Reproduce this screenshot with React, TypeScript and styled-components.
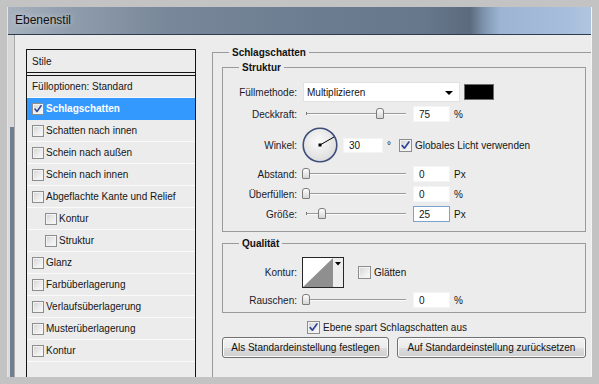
import React from 'react';
import styled, { createGlobalStyle } from 'styled-components';

const GlobalStyle = createGlobalStyle`
  body {
    margin: 0;
    background: #c3c3c3;
    font-family: "Liberation Sans", Arial, sans-serif;
    font-size: 10px;
    color: #151515;
  }
`;

interface StyleItem {
  label: string;
  checked?: boolean;
  selected?: boolean;
  indent?: boolean;
  noBox?: boolean;
}

const styleItems: StyleItem[] = [
  { label: 'Fülloptionen: Standard', noBox: true },
  { label: 'Schlagschatten', checked: true, selected: true },
  { label: 'Schatten nach innen' },
  { label: 'Schein nach außen' },
  { label: 'Schein nach innen' },
  { label: 'Abgeflachte Kante und Relief' },
  { label: 'Kontur', indent: true },
  { label: 'Struktur', indent: true },
  { label: 'Glanz' },
  { label: 'Farbüberlagerung' },
  { label: 'Verlaufsüberlagerung' },
  { label: 'Musterüberlagerung' },
  { label: 'Kontur' }
];

function CheckBox({ checked, size = 13 }: { checked?: boolean; size?: number }) {
  return (
    <Box $size={size}>
      {checked && (
        <svg width={size - 2} height={size - 2} viewBox="0 0 11 11">
          <path
            d="M2.2 5.6 L4.4 8.2 L8.9 1.9"
            fill="none"
            stroke="#2f4595"
            strokeWidth="1.7"
            strokeLinecap="round"
            strokeLinejoin="round"
          />
        </svg>
      )}
    </Box>
  );
}

function Slider({ pos }: { pos: number }) {
  return (
    <SliderWrap>
      <Track />
      {pos > 0 && <Tick />}
      <Thumb style={{ left: Math.round(pos * 98) }} />
    </SliderWrap>
  );
}

interface SliderRowProps {
  label: string;
  value: string;
  unit: string;
  pos: number;
  mt?: number;
  focused?: boolean;
}

function SliderRow({ label, value, unit, pos, mt = 0, focused }: SliderRowProps) {
  return (
    <Row $h={20} $mt={mt}>
      <Label>{label}</Label>
      <Slider pos={pos} />
      <NumberField $focused={focused}>{value}</NumberField>
      <Unit>{unit}</Unit>
    </Row>
  );
}

export default function App() {
  return (
    <>
      <GlobalStyle />
      <Frame>
        <Window>
          <TitleBar>Ebenenstil</TitleBar>
          <Body>
            <SideEdge />
            <Content>
              <ListBox>
                <ListHeader>Stile</ListHeader>
                <ListItems>
                  {styleItems.map((item, i) => (
                    <ListRow key={i} $selected={item.selected} $indent={item.indent}>
                      {!item.noBox && <CheckBox checked={item.checked} size={12} />}
                      <ListLabel $selected={item.selected}>{item.label}</ListLabel>
                    </ListRow>
                  ))}
                </ListItems>
              </ListBox>

              <Settings>
                <OuterGroup>
                  <OuterLegend>Schlagschatten</OuterLegend>

                  <Group $pad="8px 0 7px 0">
                    <GroupLegend>Struktur</GroupLegend>
                    <Row $h={20}>
                      <Label>Füllmethode:</Label>
                      <Select>
                        Multiplizieren
                        <SelectArrow />
                      </Select>
                      <Swatch />
                    </Row>
                    <SliderRow label="Deckkraft:" value="75" unit="%" pos={0.755} mt={2} />
                    <Row $h={36} $mt={3}>
                      <Label>Winkel:</Label>
                      <Dial>
                        <svg width="36" height="36" viewBox="0 0 36 36">
                          <defs>
                            <radialGradient id="dialFill" cx="45%" cy="40%" r="65%">
                              <stop offset="0" stopColor="#fbfbfb" />
                              <stop offset="1" stopColor="#dadada" />
                            </radialGradient>
                          </defs>
                          <circle
                            cx="18"
                            cy="18"
                            r="16.8"
                            fill="url(#dialFill)"
                            stroke="#3f4f7c"
                            strokeWidth="1.6"
                          />
                          <line x1="18" y1="18" x2="32" y2="10" stroke="#000" strokeWidth="1" />
                          <rect x="16.5" y="16.5" width="3" height="3" fill="#000" />
                        </svg>
                      </Dial>
                      <NumberField $w={40} $h={15}>30</NumberField>
                      <Unit>°</Unit>
                      <CheckLabel $ml={8}>
                        <CheckBox checked />
                        Globales Licht verwenden
                      </CheckLabel>
                    </Row>
                    <SliderRow label="Abstand:" value="0" unit="Px" pos={0} mt={1} />
                    <SliderRow label="Überfüllen:" value="0" unit="%" pos={0} />
                    <SliderRow label="Größe:" value="25" unit="Px" pos={0.163} focused />
                  </Group>

                  <Group $pad="6px 0 2px 0" $mt={5}>
                    <GroupLegend>Qualität</GroupLegend>
                    <Row $h={32}>
                      <Label>Kontur:</Label>
                      <ContourPicker>
                        <svg width="42" height="31" viewBox="0 0 42 31">
                          <rect x="0.5" y="0.5" width="41" height="30" fill="#fff" stroke="#262626" />
                          <polygon points="1,30 31,1 31,30" fill="#8f8f8f" />
                          <rect x="31" y="1" width="10" height="29" fill="#ededed" />
                          <polygon points="33,5 39,5 36,8.5" fill="#000" />
                        </svg>
                      </ContourPicker>
                      <CheckLabel $ml={14}>
                        <CheckBox />
                        Glätten
                      </CheckLabel>
                    </Row>
                    <SliderRow label="Rauschen:" value="0" unit="%" pos={0} mt={2} />
                  </Group>

                  <CheckLabel $ml={85} $mt={6}>
                    <CheckBox checked />
                    Ebene spart Schlagschatten aus
                  </CheckLabel>

                  <ButtonRow>
                    <Button $w={167}>Als Standardeinstellung festlegen</Button>
                    <Button $w={189}>Auf Standardeinstellung zurücksetzen</Button>
                  </ButtonRow>
                </OuterGroup>
              </Settings>
            </Content>
          </Body>
        </Window>
      </Frame>
    </>
  );
}

const Frame = styled.div`
  width: 599px;
  height: 384px;
  box-sizing: border-box;
  padding: 7px;
  background: #c3c3c3;
  overflow: hidden;
`;

const Window = styled.div`
  height: 100%;
  display: flex;
  flex-direction: column;
  border-left: 1px solid #e2e4e6;
  border-right: 1px solid #f4f4f4;
  overflow: hidden;
`;

const TitleBar = styled.div`
  height: 28px;
  box-sizing: border-box;
  flex-shrink: 0;
  display: flex;
  align-items: center;
  padding: 0 0 1px 7px;
  font-size: 12px;
  color: #101010;
  border-bottom: 1px solid #2f3d4f;
  text-shadow: 0 0 6px rgba(255, 255, 255, 0.7);
  background: linear-gradient(
    90deg,
    #a7b2be 0px,
    #909dad 60px,
    #788799 160px,
    #6d7d91 300px,
    #66768b 420px,
    #5c6a7c 462px,
    #7e94ae 476px,
    #9db5d3 492px,
    #a7bfdc 560px,
    #b0c6e0 584px
  );
`;

const Body = styled.div`
  flex: 1;
  min-height: 0;
  display: flex;
`;

const SideEdge = styled.div`
  width: 6px;
  flex-shrink: 0;
  border-right: 1px solid #a9a9a9;
  background: linear-gradient(to bottom, #d8d8d8 92px, transparent 92px),
    linear-gradient(to right, #dcdcdc 2px, #6e7f94 2px);
`;

const Content = styled.div`
  flex: 1;
  min-width: 0;
  display: flex;
  align-items: stretch;
  padding: 14px 0 0 11px;
  background: #ececec;
  overflow: hidden;
`;

const ListBox = styled.div`
  width: 170px;
  flex-shrink: 0;
  box-sizing: border-box;
  border: 1px solid #141414;
  border-bottom: none;
  background: #ececec;
`;

const ListHeader = styled.div`
  height: 23px;
  box-sizing: border-box;
  display: flex;
  align-items: center;
  padding-left: 5px;
  border-bottom: 1px solid #141414;
`;

const ListItems = styled.div`
  margin-top: 2px;
  border-top: 1px solid #141414;
`;

const ListRow = styled.div<{ $selected?: boolean; $indent?: boolean }>`
  height: 22px;
  box-sizing: border-box;
  display: flex;
  align-items: center;
  gap: 2px;
  padding-left: ${(p) => (p.$indent ? 18 : 5)}px;
  border-bottom: 1px solid ${(p) => (p.$selected ? '#3399ff' : '#fafafa')};
  background: ${(p) => (p.$selected ? '#3399ff' : 'transparent')};
`;

const ListLabel = styled.span<{ $selected?: boolean }>`
  color: ${(p) => (p.$selected ? '#fff' : '#151515')};
  font-weight: ${(p) => (p.$selected ? 'bold' : 'normal')};
`;

const Box = styled.span<{ $size: number }>`
  width: ${(p) => p.$size}px;
  height: ${(p) => p.$size}px;
  box-sizing: border-box;
  flex-shrink: 0;
  display: inline-flex;
  align-items: center;
  justify-content: center;
  border: 1px solid #8c8d8d;
  box-shadow: inset 0 0 0 1px #f3f3f3;
  background: linear-gradient(135deg, #d2d2d2 0%, #ececec 55%, #fbfbfb 100%);
`;

const Settings = styled.div`
  flex: 1;
  min-width: 0;
  margin-left: 16px;
`;

const OuterGroup = styled.fieldset`
  margin: -3px 0 0 0;
  padding: 2px 0 0 9px;
  min-width: 0;
  height: 360px;
  box-sizing: border-box;
  border: 1px solid #9a9a9a;
  border-right: none;
  border-bottom: none;
`;

const OuterLegend = styled.legend`
  margin-left: 7px;
  padding: 0 3px;
  line-height: 13px;
  font-weight: bold;
  color: #111;
`;

const Group = styled.fieldset<{ $pad: string; $mt?: number }>`
  width: 364px;
  box-sizing: border-box;
  margin: ${(p) => p.$mt ?? 0}px 0 0 0;
  padding: ${(p) => p.$pad};
  min-width: 0;
  border: 1px solid #9a9a9a;
`;

const GroupLegend = styled.legend`
  margin-left: 16px;
  padding: 0 3px;
  line-height: 13px;
  font-weight: bold;
  color: #111;
`;

const Row = styled.div<{ $h: number; $mt?: number }>`
  display: flex;
  align-items: center;
  height: ${(p) => p.$h}px;
  margin-top: ${(p) => p.$mt ?? 0}px;
`;

const Label = styled.span`
  width: 74px;
  flex-shrink: 0;
  text-align: right;
  color: #1a1a2a;
`;

const Select = styled.div`
  position: relative;
  width: 157px;
  height: 20px;
  box-sizing: border-box;
  margin-left: 6px;
  padding-left: 3px;
  display: flex;
  align-items: center;
  background: #fff;
  border: 1px solid #e2e2e2;
`;

const SelectArrow = styled.span`
  position: absolute;
  right: 6px;
  top: 8px;
  border-left: 4px solid transparent;
  border-right: 4px solid transparent;
  border-top: 4px solid #000;
`;

const Swatch = styled.div`
  width: 30px;
  height: 16px;
  box-sizing: border-box;
  margin-left: 4px;
  background: #000;
  border: 1px solid #6b6b6b;
`;

const SliderWrap = styled.div`
  position: relative;
  width: 106px;
  height: 20px;
  margin-left: 5px;
  flex-shrink: 0;
`;

const Track = styled.div`
  position: absolute;
  left: 4px;
  right: 2px;
  top: 9px;
  height: 1px;
  background: #9a9a9a;
  border-bottom: 1px solid #fbfbfb;
`;

const Tick = styled.div`
  position: absolute;
  left: 4px;
  top: 8px;
  width: 1px;
  height: 3px;
  background: #777;
`;

const Thumb = styled.div`
  position: absolute;
  top: 4px;
  width: 8px;
  height: 11px;
  box-sizing: border-box;
  border: 1px solid #7c7c7c;
  border-radius: 3px 3px 1px 1px;
  background: linear-gradient(#fdfdfd, #d6d6d6);
`;

const NumberField = styled.div<{ $w?: number; $h?: number; $focused?: boolean }>`
  width: ${(p) => p.$w ?? 37}px;
  height: ${(p) => p.$h ?? 16}px;
  box-sizing: border-box;
  margin-left: 5px;
  padding-left: 5px;
  display: flex;
  align-items: center;
  background: #fff;
  border: 1px solid ${(p) => (p.$focused ? '#7da2ce' : '#f4f4f4')};
  flex-shrink: 0;
`;

const Unit = styled.span`
  margin-left: 4px;
`;

const Dial = styled.div`
  width: 36px;
  height: 36px;
  margin-left: 5px;
  flex-shrink: 0;
  display: flex;
`;

const CheckLabel = styled.div<{ $ml?: number; $mt?: number }>`
  display: flex;
  align-items: center;
  gap: 3px;
  height: 16px;
  margin-left: ${(p) => p.$ml ?? 0}px;
  margin-top: ${(p) => p.$mt ?? 0}px;
`;

const ContourPicker = styled.div`
  width: 42px;
  height: 31px;
  margin-left: 5px;
  flex-shrink: 0;
  display: flex;
`;

const ButtonRow = styled.div`
  display: flex;
  gap: 8px;
  margin-top: 2px;
`;

const Button = styled.button<{ $w: number }>`
  width: ${(p) => p.$w}px;
  height: 21px;
  padding: 0;
  font: inherit;
  color: #111;
  border: 1px solid #707070;
  border-radius: 3px;
  box-shadow: inset 0 0 0 1px #fbfbfb;
  background: linear-gradient(#f2f2f2 0%, #ebebeb 50%, #dddddd 51%, #cfcfcf 100%);
`;
